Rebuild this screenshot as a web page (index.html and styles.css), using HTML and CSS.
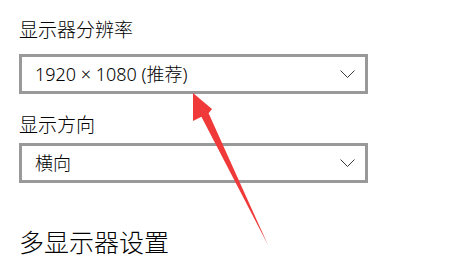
FILE: index.html
```html
<!DOCTYPE html>
<html lang="zh-CN">
<head>
<meta charset="utf-8">
<link rel="stylesheet" href="styles.css">
</head>
<body>
<main class="page">
  <div class="label first">显示器分辨率</div>
  <div class="combo combo-res">
    <span class="combo-text">1920 × 1080 (推荐)</span>
    <svg class="chev" width="15" height="8" viewBox="0 0 15 8"><polyline points="0.5,0.5 7.5,7.5 14.5,0.5" fill="none" stroke="#3a3a3a" stroke-width="1"/></svg>
  </div>
  <div class="label second">显示方向</div>
  <div class="combo combo-orient">
    <span class="combo-text">横向</span>
    <svg class="chev" width="15" height="8" viewBox="0 0 15 8"><polyline points="0.5,0.5 7.5,7.5 14.5,0.5" fill="none" stroke="#3a3a3a" stroke-width="1"/></svg>
  </div>
  <h2 class="heading">多显示器设置</h2>
</main>
<svg class="arrow" width="457" height="268" viewBox="0 0 457 268">
  <polygon points="193,93 212,109 208.6,113.3 268,245 201.4,116.7 193,121" fill="#f03a3a"/>
</svg>
</body>
</html>
```

FILE: styles.css
```css
html, body {
  margin: 0;
  padding: 0;
  background: #ffffff;
}
body {
  width: 457px;
  height: 268px;
  overflow: hidden;
  position: relative;
  font-family: "Noto Sans", "Noto Sans CJK SC", sans-serif;
  color: #000;
}
.page {
  padding: 17px 0 0 19px;
  display: flex;
  flex-direction: column;
  align-items: flex-start;
}
.label {
  font-size: 19px;
  line-height: 26px;
  height: 26px;
  font-weight: 300;
}
.label.second {
  margin-top: 18px;
}
.combo {
  box-sizing: border-box;
  width: 349px;
  height: 40px;
  border: 3px solid #999;
  display: flex;
  align-items: center;
  justify-content: space-between;
  padding: 0 10px 0 13px;
  margin-top: 11px;
}
.combo-orient {
  margin-top: 5px;
}
.combo-text {
  font-size: 18px;
  line-height: 24px;
  font-weight: 300;
}
.chev {
  display: block;
}
.heading {
  margin: 42px 0 0 0;
  font-weight: 300;
  font-size: 25px;
  line-height: 34px;
}
.arrow {
  position: absolute;
  left: 0;
  top: 0;
  pointer-events: none;
}
```
